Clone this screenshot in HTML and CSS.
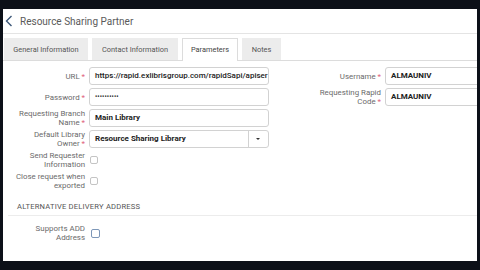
FILE: index.html
```html
<!DOCTYPE html>
<html>
<head>
<meta charset="utf-8">
<link rel="stylesheet" href="styles.css">
</head>
<body>
<div class="frame">
  <div class="header">
    <svg class="back" width="8" height="12" viewBox="0 0 8 12"><path d="M6.5 1 L1.5 6 L6.5 11" fill="none" stroke="#3d5878" stroke-width="1.4"/></svg>
    <span class="title">Resource Sharing Partner</span>
  </div>
  <div class="tabs">
    <div class="tab t1">General Information</div>
    <div class="tab t2">Contact Information</div>
    <div class="tab t3 active">Parameters</div>
    <div class="tab t4">Notes</div>
  </div>
  <div class="form">
    <div class="col left">
      <div class="label">URL <span class="req">*</span></div>
      <div class="input">https://rapid.exlibrisgroup.com/rapidSapi/apiser</div>
      <div class="label">Password <span class="req">*</span></div>
      <div class="input dots">••••••••••</div>
      <div class="label">Requesting Branch<br>Name <span class="req">*</span></div>
      <div class="input bold">Main Library</div>
      <div class="label">Default Library<br>Owner <span class="req">*</span></div>
      <div class="input select bold"><span class="val">Resource Sharing Library</span><span class="caret"></span></div>
      <div class="label cb-label">Send Requester<br>Information</div>
      <div class="cb-cell"><span class="cb"></span></div>
      <div class="label cb-label">Close request when<br>exported</div>
      <div class="cb-cell"><span class="cb"></span></div>
    </div>
    <div class="col right">
      <div class="label">Username <span class="req">*</span></div>
      <div class="input bold">ALMAUNIV</div>
      <div class="label">Requesting Rapid<br>Code <span class="req">*</span></div>
      <div class="input bold">ALMAUNIV</div>
    </div>
  </div>
  <div class="section">ALTERNATIVE DELIVERY ADDRESS</div>
  <div class="col add">
    <div class="label cb-label">Supports ADD<br>Address</div>
    <div class="cb-cell"><span class="cb blue"></span></div>
  </div>
</div>
</body>
</html>
```

FILE: styles.css
```css
html, body {
  margin: 0;
  padding: 0;
  background: #0c1018;
  width: 480px;
  height: 270px;
  overflow: hidden;
  font-family: Roboto, "Liberation Sans", sans-serif;
}
.frame {
  margin: 9px 3px 0 3px;
  height: 252px;
  background: #fff;
  overflow: hidden;
}
.header {
  height: 24px;
  display: flex;
  align-items: center;
  border-bottom: 1px solid #e4e4e4;
}
.back {
  margin-left: 2px;
}
.title {
  margin-left: 7px;
  font-size: 10px;
  color: #5a5a5a;
}
.tabs {
  display: flex;
  gap: 4px;
  margin-top: 4px;
  padding-left: 1px;
  border-bottom: 1px solid #dcdcdc;
}
.tab {
  height: 21px;
  line-height: 21px;
  font-size: 7.4px;
  color: #555;
  background: #ececec;
  text-align: center;
  border: 1px solid #ececec;
  border-bottom: none;
}
.t1 { width: 82px; }
.t2 { width: 84px; }
.t3 { width: 54px; }
.t4 { width: 37px; }
.tab.active {
  background: #fff;
  border-color: #dcdcdc;
  margin-bottom: -1px;
  height: 22px;
  color: #444;
}
.form {
  display: flex;
  margin-top: 6px;
}
.col {
  display: grid;
  column-gap: 4px;
  row-gap: 3px;
  align-items: center;
}
.left {
  grid-template-columns: 79px 180px;
  padding-left: 3px;
}
.right {
  grid-template-columns: 95px 100px;
  margin-left: 17px;
  align-self: start;
}
.label {
  text-align: right;
  font-size: 7.9px;
  line-height: 9px;
  color: #6a6a6a;
}
.req {
  color: #e0607a;
}
.input {
  height: 16px;
  border: 1px solid #d2d2d2;
  border-radius: 3px;
  font-size: 8px;
  line-height: 16px;
  padding-left: 5px;
  color: #222;
  white-space: nowrap;
  overflow: hidden;
  font-weight: 500;
}
.bold {
  font-weight: 700;
}
.dots {
  font-size: 6.5px;
  letter-spacing: 0.1px;
  color: #333;
}
.select {
  display: flex;
  padding-left: 0;
}
.select .val {
  flex: 1;
  padding-left: 5px;
}
.select .caret {
  width: 19px;
  border-left: 1px solid #d2d2d2;
  position: relative;
}
.select .caret::after {
  content: "";
  position: absolute;
  left: 7px;
  top: 7px;
  border-left: 2.5px solid transparent;
  border-right: 2.5px solid transparent;
  border-top: 2.5px solid #333;
}
.cb-label {
  height: 18px;
  display: flex;
  flex-direction: column;
  justify-content: center;
  align-items: flex-end;
  text-align: right;
}
.cb-cell {
  height: 18px;
  display: flex;
  align-items: center;
}
.cb {
  display: inline-block;
  width: 6px;
  height: 6px;
  border: 1px solid #c4c4c4;
  border-radius: 2px;
  margin-left: 1px;
}
.cb.blue {
  width: 7px;
  height: 7px;
  border-color: #7d97b8;
  margin-left: 2px;
}
.section {
  margin: 12px 0 0 5px;
  padding: 0 0 4px 9px;
  font-size: 7.6px;
  color: #555;
  letter-spacing: 0.2px;
  border-bottom: 1px solid #ececec;
}
.add {
  grid-template-columns: 79px 180px;
  padding-left: 3px;
  margin-top: 8px;
}
```
